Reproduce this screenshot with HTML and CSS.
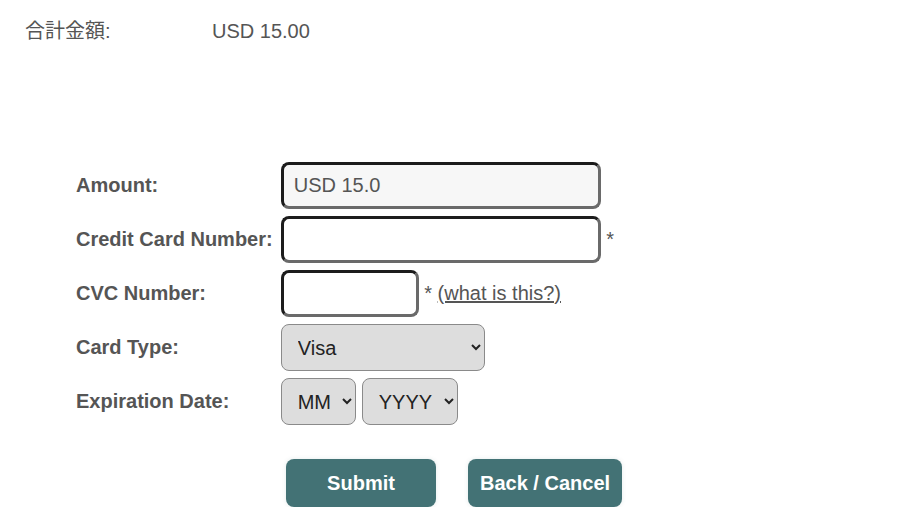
FILE: index.html
```html
<!DOCTYPE html>
<html>
<head>
  <meta charset="utf-8">
  <title>Payment</title>
  <link rel="stylesheet" href="styles.css">
</head>
<body>
  <div class="total">
    <span class="total-label">合計金額:</span>
    <span class="total-value">USD 15.00</span>
  </div>
  <form class="pay-form">
    <div class="pay-grid">
      <label class="field-label" for="amount">Amount:</label>
      <div class="field"><input class="text-input wide readonly" id="amount" type="text" value="USD 15.0" readonly></div>

      <label class="field-label" for="card-number">Credit Card Number:</label>
      <div class="field"><input class="text-input wide" id="card-number" type="text"> *</div>

      <label class="field-label" for="cvc">CVC Number:</label>
      <div class="field"><input class="text-input short" id="cvc" type="text"> * <a class="help-link" href="#">(what is this?)</a></div>

      <label class="field-label" for="card-type">Card Type:</label>
      <div class="field">
        <select class="pick pick-type" id="card-type">
          <option>Visa</option>
          <option>MasterCard</option>
          <option>American Express</option>
        </select>
      </div>

      <label class="field-label" for="exp-month">Expiration Date:</label>
      <div class="field">
        <select class="pick pick-month" id="exp-month">
          <option>MM</option>
        </select>
        <select class="pick pick-year" id="exp-year">
          <option>YYYY</option>
        </select>
      </div>
    </div>
    <div class="actions">
      <button class="btn" type="submit">Submit</button>
      <button class="btn" type="button">Back / Cancel</button>
    </div>
  </form>
</body>
</html>
```

FILE: styles.css
```css
body {
  margin: 0;
  font-family: "Liberation Sans", Arial, "Noto Sans CJK JP", sans-serif;
  font-size: 20px;
  color: #555;
  background: #fff;
}
.total {
  display: flex;
  padding: 20px 0 0 25px;
  line-height: 23px;
}
.total-label {
  width: 187px;
}
.pay-form {
  padding: 119px 0 0 76px;
}
.pay-grid {
  display: grid;
  grid-template-columns: auto 1fr;
  column-gap: 8px;
  row-gap: 7px;
}
.field-label {
  font-weight: bold;
  align-self: center;
}
.field {
  display: flex;
  align-items: center;
  white-space: pre;
}
.text-input {
  box-sizing: border-box;
  height: 47px;
  padding: 0 10px;
  font-family: inherit;
  font-size: 20px;
  color: #555;
  background: #fff;
  border: 3px solid;
  border-color: #1c1c1c #6a6a6a #6a6a6a #1c1c1c;
  border-radius: 8px;
  outline: none;
}
.text-input.wide {
  width: 320px;
}
.text-input.short {
  width: 138px;
}
.text-input.readonly {
  background: #f7f7f7;
}
.help-link {
  color: #555;
}
.pick {
  box-sizing: border-box;
  height: 47px;
  padding: 0 6px 0 12px;
  font-family: inherit;
  font-size: 20px;
  color: #222;
  background-color: #ddd;
  border: 1px solid #8a8a8a;
  border-radius: 8px;
}
.pick-type {
  width: 204px;
}
.pick-month {
  width: 75px;
}
.pick-year {
  width: 96px;
  margin-left: 6px;
}
.actions {
  display: flex;
  gap: 32px;
  padding: 34px 0 0 210px;
}
.btn {
  height: 48px;
  padding: 0 12px;
  min-width: 150px;
  font-family: inherit;
  font-size: 20px;
  font-weight: bold;
  color: #fff;
  background: #437275;
  border: none;
  border-radius: 8px;
  box-shadow: 0 0 4px rgba(67, 114, 117, 0.15);
  cursor: pointer;
}
```
